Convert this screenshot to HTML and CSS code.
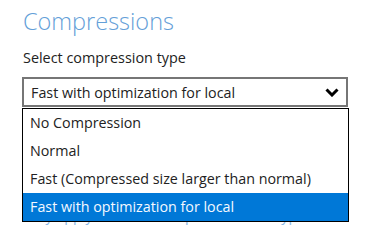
FILE: index.html
```html
<!DOCTYPE html>
<html lang="en">
<head>
    <meta charset="UTF-8">
    <meta name="viewport" content="width=device-width, initial-scale=1.0">
    <title>Compressions</title>
    <link rel="stylesheet" href="styles.css">
</head>
<body>
    <div class="panel">
        <h1 class="title">Compressions</h1>
        <label class="label" for="compression">Select compression type</label>

        <div class="picker">
            <div class="select" id="compression">
                <span>Fast with optimization for local</span>
                <svg class="chevron" width="14" height="9" viewBox="0 0 14 9">
                    <polyline points="1.5,1.5 7,7 12.5,1.5" fill="none" stroke="#000" stroke-width="3"/>
                </svg>
            </div>
            <ul class="options">
                <li>No Compression</li>
                <li>Normal</li>
                <li>Fast (Compressed size larger than normal)</li>
                <li class="active">Fast with optimization for local</li>
            </ul>
        </div>

        <p class="hint">Only apply to new backup data of this type.</p>
    </div>
</body>
</html>
```

FILE: styles.css
```css
*{
    margin: 0;
    padding: 0;
    box-sizing: border-box;
}
body{
    background-color: #ffffff;
    font-family: "Open Sans", "DejaVu Sans", sans-serif;
    color: #222222;
}
.panel{
    padding: 6px 22px 0 22px;
}
.title{
    font-size: 23.5px;
    font-weight: 300;
    line-height: 30px;
    color: #64a0d8;
    padding-left: 1px;
}
.label{
    display: block;
    margin-top: 13px;
    font-size: 14.4px;
    line-height: 18px;
    padding-left: 1px;
}
.picker{
    position: relative;
    margin-top: 10px;
    width: 326px;
}
.select{
    display: flex;
    align-items: center;
    justify-content: space-between;
    height: 30px;
    border: 2px solid #767676;
    padding: 0 7px 0 7px;
    font-size: 14.3px;
}
.chevron{
    display: block;
}
.options{
    position: absolute;
    top: 31px;
    left: 0;
    width: 327px;
    list-style: none;
    background-color: #ffffff;
    border: 1px solid #000000;
    font-size: 14.3px;
}
.options li{
    height: 28px;
    line-height: 28px;
    padding-left: 7px;
}
.options li.active{
    background-color: #0078d7;
    color: #f4f8ff;
}
.hint{
    margin-top: 100px;
    font-size: 14.3px;
    line-height: 18px;
    white-space: nowrap;
    color: #8ab8e6;
}
```
